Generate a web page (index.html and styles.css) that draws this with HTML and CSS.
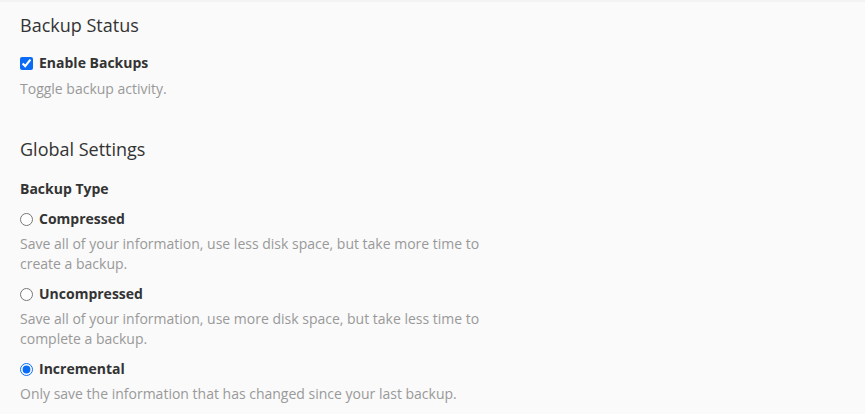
FILE: index.html
```html
<!DOCTYPE html>
<html lang="en">
<head>
<meta charset="utf-8">
<title>Backup Configuration</title>
<link rel="stylesheet" href="styles.css">
</head>
<body>
<main class="page">
  <section class="section">
    <h2 class="section-title">Backup Status</h2>
    <label class="option">
      <input type="checkbox" class="control" checked>
      <span class="option-label">Enable Backups</span>
    </label>
    <p class="help help-status">Toggle backup activity.</p>
  </section>

  <section class="section section-global">
    <h2 class="section-title">Global Settings</h2>
    <div class="field-title">Backup Type</div>
    <div class="choices">
      <div class="choice">
        <label class="option">
          <input type="radio" name="type" class="control">
          <span class="option-label">Compressed</span>
        </label>
        <p class="help">Save all of your information, use less disk space, but take more time to create a backup.</p>
      </div>
      <div class="choice">
        <label class="option">
          <input type="radio" name="type" class="control">
          <span class="option-label">Uncompressed</span>
        </label>
        <p class="help">Save all of your information, use more disk space, but take less time to complete a backup.</p>
      </div>
      <div class="choice">
        <label class="option">
          <input type="radio" name="type" class="control" checked>
          <span class="option-label">Incremental</span>
        </label>
        <p class="help">Only save the information that has changed since your last backup.</p>
      </div>
    </div>
  </section>
</main>
</body>
</html>
```

FILE: styles.css
```css
html, body {
  margin: 0;
  padding: 0;
  background: #fafafa;
}

body {
  font-family: "Open Sans", "Liberation Sans", sans-serif;
  font-size: 14px;
  line-height: 20px;
  color: #333;
  border-top: 2px solid #f3f3f3;
}

.page {
  padding: 11px 20px 0;
}

.section-title {
  margin: 0;
  font-size: 18px;
  line-height: 24px;
  font-weight: 400;
  color: #333;
}

.section-global {
  margin-top: 38px;
}

.option {
  display: flex;
  align-items: center;
  margin-top: 16px;
  cursor: pointer;
}

.control {
  margin: 0 6px 0 0;
  width: 13px;
  height: 13px;
  accent-color: #0a6cf5;
}

.option-label {
  font-weight: 700;
  color: #333;
}

.help {
  margin: 5px 0 0;
  max-width: 470px;
  color: #999;
}

.help-status {
  margin-top: 6px;
}

.field-title {
  margin-top: 18px;
  font-weight: 700;
  color: #333;
}

.choices {
  display: flex;
  flex-direction: column;
  gap: 10px;
  margin-top: 10px;
}

.choice .option {
  margin-top: 0;
}
```
